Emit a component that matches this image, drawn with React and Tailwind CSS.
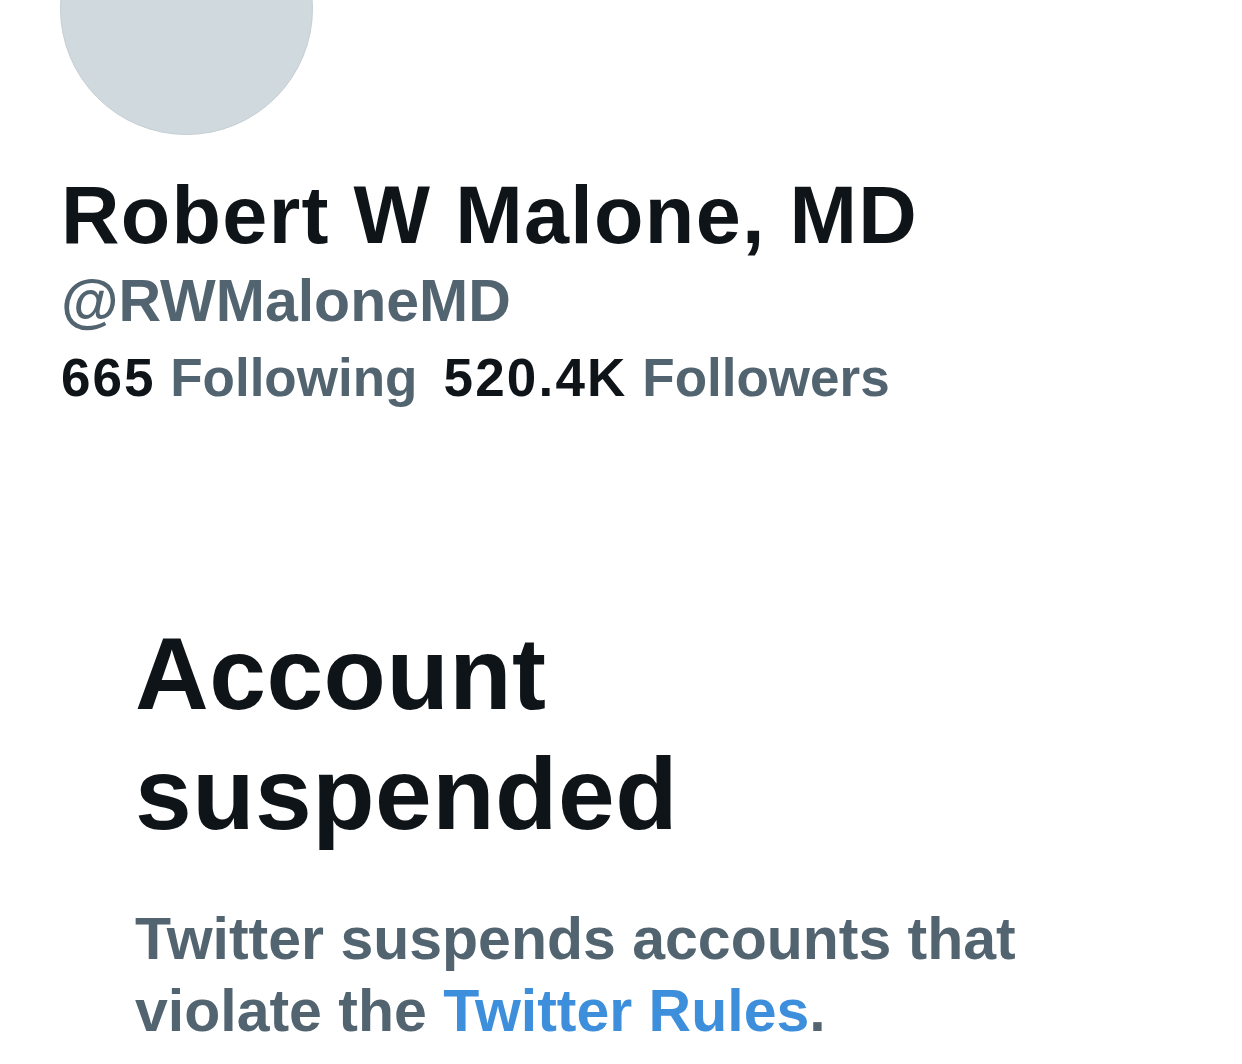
export default function App() {
  return (
    <div className="min-h-screen w-[1242px] h-[1064px] overflow-hidden bg-white font-['Liberation_Sans',Arial,sans-serif]">
      <div className="pl-[60px]">
        <div className="mt-[-118px] h-[253px] w-[253px] rounded-full bg-[#cfd9de] border border-[#c4ced3]" />
      </div>

      <div className="pl-[61px]">
        <h1 className="mt-[40px] text-[81px] leading-[81px] font-bold text-[#0f1419] tracking-[1.3px] whitespace-nowrap">
          Robert W Malone, MD
        </h1>
        <div className="mt-[16px] text-[59px] leading-[59px] font-bold text-[#536471] whitespace-nowrap">
          @RWMaloneMD
        </div>
        <div className="mt-[20px] flex gap-[26px] text-[53px] leading-[53px] font-bold whitespace-nowrap">
          <span>
            <span className="text-[#0f1419] tracking-[2px]">665</span>{' '}
            <span className="text-[#536471]">Following</span>
          </span>
          <span>
            <span className="text-[#0f1419] tracking-[2.2px]">520.4K</span>{' '}
            <span className="text-[#536471]">Followers</span>
          </span>
        </div>
      </div>

      <div className="pl-[135px]">
        <h2 className="mt-[210px] w-[620px] text-[102px] leading-[120px] font-bold text-[#0f1419] tracking-[0.5px]">
          Account suspended
        </h2>
        <p className="mt-[49px] w-[960px] text-[59px] leading-[72px] font-bold text-[#536471]">
          Twitter suspends accounts that violate the{' '}
          <a href="#" className="text-[#3d8fdc]">
            Twitter Rules
          </a>
          .
        </p>
      </div>
    </div>
  );
}
